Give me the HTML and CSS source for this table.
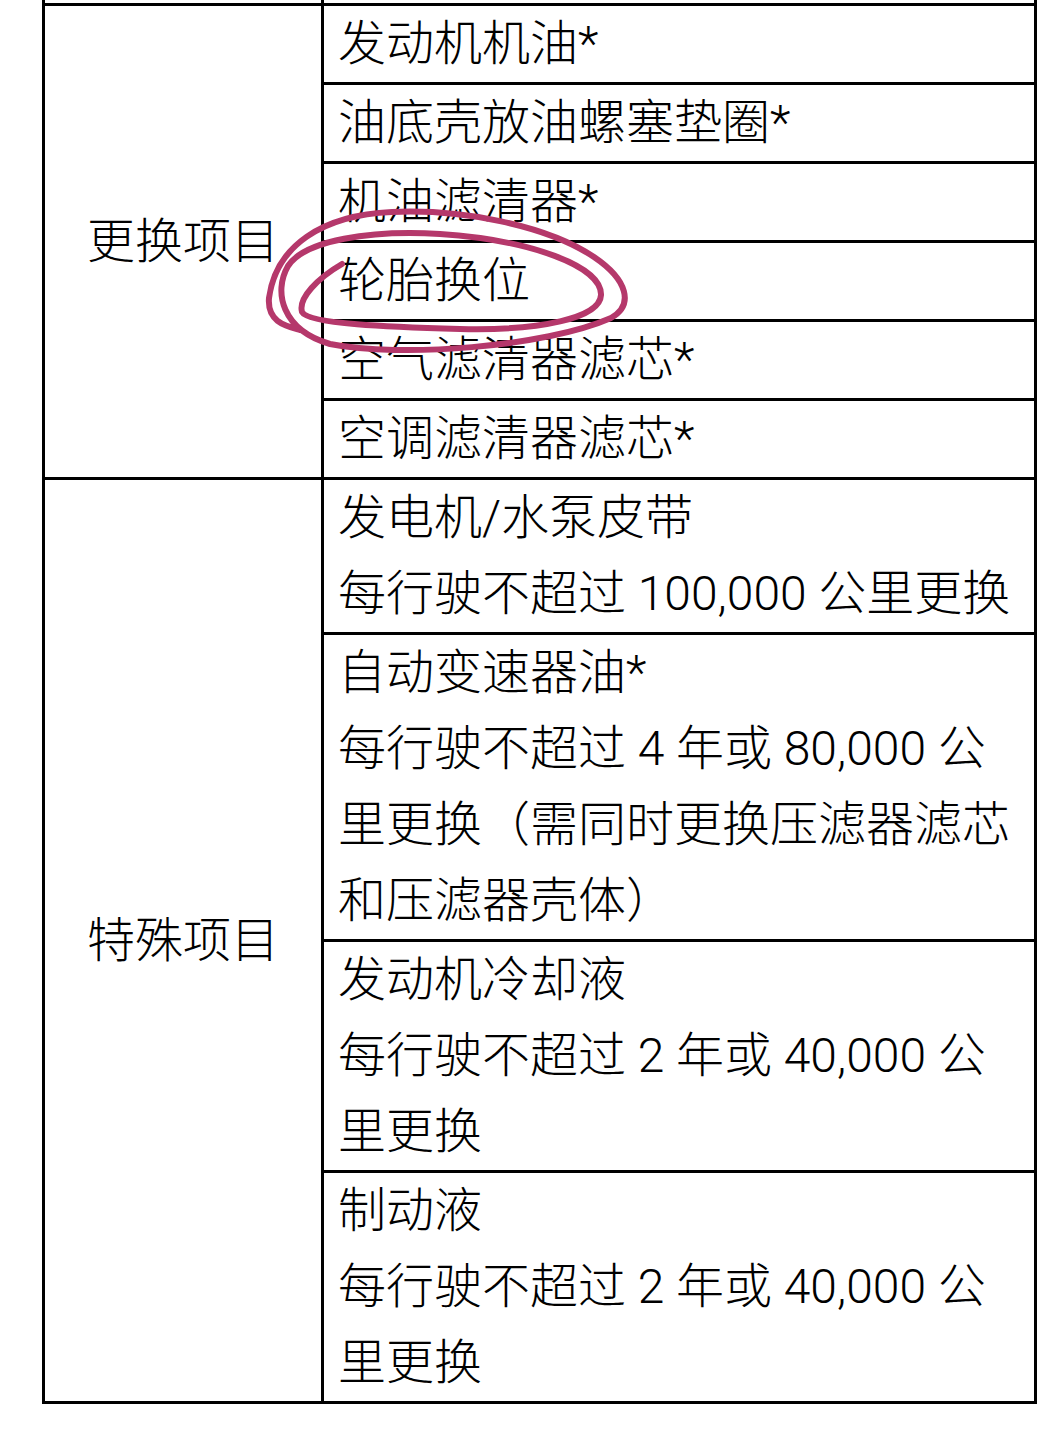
FILE: index.html
```html
<!DOCTYPE html>
<html lang="zh-CN">
<head>
<meta charset="utf-8">
<title>保养项目</title>
<link rel="stylesheet" href="styles.css">
</head>
<body>
<div class="page">
  <table class="maint">
    <colgroup><col class="c1"><col class="c2"></colgroup>
    <tr class="cut"><td></td><td></td></tr>
    <tr><td class="group" rowspan="6">更换项目</td><td class="item">发动机机油*</td></tr>
    <tr><td class="item">油底壳放油螺塞垫圈*</td></tr>
    <tr><td class="item">机油滤清器*</td></tr>
    <tr><td class="item">轮胎换位</td></tr>
    <tr><td class="item">空气滤清器滤芯*</td></tr>
    <tr><td class="item">空调滤清器滤芯*</td></tr>
    <tr><td class="group" rowspan="4">特殊项目</td><td class="item">发电机/水泵皮带<br>每行驶不超过 100,000 公里更换</td></tr>
    <tr><td class="item">自动变速器油*<br>每行驶不超过 4 年或 80,000 公里更换（需同时更换压滤器滤芯和压滤器壳体）</td></tr>
    <tr><td class="item">发动机冷却液<br>每行驶不超过 2 年或 40,000 公里更换</td></tr>
    <tr><td class="item">制动液<br>每行驶不超过 2 年或 40,000 公里更换</td></tr>
  </table>
  <svg class="scribble" viewBox="0 0 1046 1436" width="1046" height="1436" aria-hidden="true">
    <path d="M342,264 C318,278 298,298 302,312 C308,324 390,327 460,329 C540,331 600,318 601,295 C602,266 530,240 440,234 C370,230 305,240 288,266 C273,292 282,330 330,344 C400,358 545,347 611,318 C634,305 628,280 594,257 C546,225 462,209 392,212 C322,215 276,246 269,298 C267,322 286,326 300,330"
      fill="none" stroke="#b5386b" stroke-width="6" stroke-linecap="round" stroke-linejoin="round"/>
  </svg>
</div>
</body>
</html>
```

FILE: styles.css
```css
html, body {
  margin: 0;
  padding: 0;
  background: #ffffff;
}

.page {
  position: relative;
  width: 1046px;
  height: 1436px;
  overflow: hidden;
}

.maint {
  margin-left: 42px;
  width: 995px;
  table-layout: fixed;
  border-collapse: collapse;
  border: 3px solid #000;
  border-top: none;
  font-family: Roboto, "Noto Sans CJK SC", sans-serif;
  font-size: 48px;
  font-weight: 300;
  line-height: 76px;
  color: #000;
}

.c1 { width: 279px; }
.c2 { width: 713px; }

.maint td {
  border: 3px solid #000;
  padding: 0 14px;
}

.maint tr.cut td {
  border-top: none;
  height: 3px;
  padding: 0;
  line-height: 0;
}

.group {
  text-align: center;
  vertical-align: middle;
}

.item {
  text-align: left;
  vertical-align: top;
}

.scribble {
  position: absolute;
  left: 0;
  top: 0;
  pointer-events: none;
}
```
